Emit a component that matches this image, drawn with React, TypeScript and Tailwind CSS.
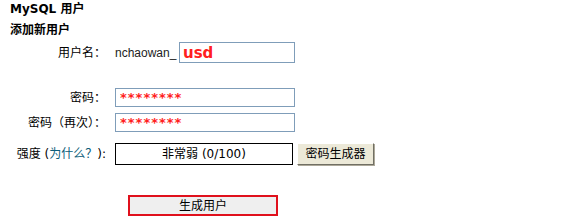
import React from 'react';

const font = { fontFamily: '"DejaVu Sans", "Noto Sans CJK SC", sans-serif' };

export default function App() {
  return (
    <div className="w-[579px] h-[218px] bg-white text-black text-[12px] leading-none relative" style={font}>
      {/* Headings */}
      <div className="pl-[10px] pt-[3px]">
        <h2 className="font-bold text-[12px] h-[12px]">MySQL 用户</h2>
        <h3 className="font-bold text-[12px] mt-[9px] h-[12px]">添加新用户</h3>
      </div>

      {/* Form */}
      <div className="grid grid-cols-[106px_1fr] gap-x-[9px] mt-[6px]">
        <div className="text-right h-[21px] flex items-center justify-end">用户名：</div>
        <div className="flex items-center h-[21px]">
          <span className="text-[12px] text-[#222] w-[64px] font-['Liberation_Sans',sans-serif]">nchaowan_</span>
          <input
            readOnly
            value="usd"
            className="w-[116px] h-[21px] border border-[#7f9db9] px-[3px] text-[15px] font-bold text-[#ff2020] outline-none"
          />
        </div>

        <div className="h-[25px] col-span-2" />

        <div className="text-right h-[19px] flex items-center justify-end">密码：</div>
        <div className="flex items-center h-[19px]">
          <input
            readOnly
            value="********"
            className="w-[180px] h-[19px] border border-[#7f9db9] px-[4px] text-[13px] font-bold tracking-[1px] text-[#ff2020] outline-none"
          />
        </div>

        <div className="h-[6px] col-span-2" />

        <div className="text-right h-[19px] flex items-center justify-end">密码（再次）：</div>
        <div className="flex items-center h-[19px]">
          <input
            readOnly
            value="********"
            className="w-[180px] h-[19px] border border-[#7f9db9] px-[4px] text-[13px] font-bold tracking-[1px] text-[#ff2020] outline-none"
          />
        </div>

        <div className="h-[11px] col-span-2" />

        <div className="text-right h-[22px] flex items-center justify-end">
          强度 (<a className="text-[#0b5d7a]">为什么？</a>):
        </div>
        <div className="flex items-center gap-[4px] h-[22px]">
          <div className="w-[178px] h-[22px] border border-black flex items-center justify-center text-[12px]">
            非常弱 (0/100)
          </div>
          <button className="w-[77px] h-[22px] bg-[#ece9d8] border border-t-white border-l-white border-r-[#716f64] border-b-[#716f64] shadow-[1px_1px_0_#aca899] text-[12px]">
            密码生成器
          </button>
        </div>
      </div>

      <div className="pl-[128px] mt-[30px]">
        <button className="w-[150px] h-[21px] bg-[#efefef] border-2 border-[#e0101c] text-[12px]">
          生成用户
        </button>
      </div>
    </div>
  );
}
